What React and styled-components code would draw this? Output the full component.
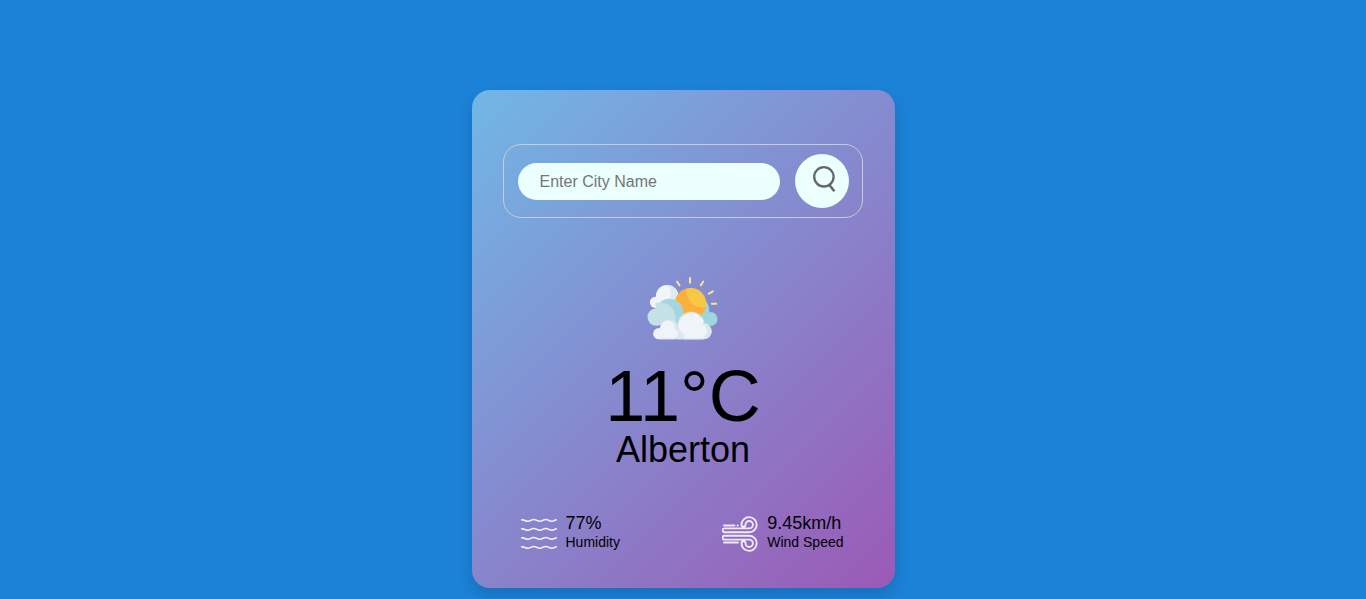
import React, { useState } from "react";
import styled, { createGlobalStyle } from "styled-components";

const GlobalStyle = createGlobalStyle`
  *, *::before, *::after { box-sizing: border-box; }
  body {
    margin: 0;
    background: #1c82d8;
    color: #000;
    font-family: "Liberation Sans", Arial, sans-serif;
  }
`;

const Page = styled.main`
  padding: 90px 16px 10px;
`;

const Card = styled.section`
  width: 100%;
  max-width: 423px;
  margin: 0 auto;
  padding: 54px 32px 36px 31px;
  border-radius: 18px;
  background: linear-gradient(135deg, #71b7e6, #9b59b6);
  box-shadow: 0 8px 16px rgba(0, 0, 0, 0.15);
`;

const SearchForm = styled.form`
  display: flex;
  align-items: center;
  gap: 15px;
  padding: 9px 13px 9px 14px;
  border: 1px solid #ccc;
  border-radius: 18px;
`;

const CityInput = styled.input`
  flex: 1;
  min-width: 0;
  height: 37px;
  padding: 1px 22px 0;
  border: 0;
  outline: 0;
  border-radius: 20px;
  background: #ebfffc;
  color: #555;
  font: 16px "Liberation Sans", Arial, sans-serif;

  &::placeholder { color: #757575; }
`;

const SearchButton = styled.button`
  display: flex;
  flex: none;
  align-items: center;
  justify-content: center;
  width: 54px;
  height: 54px;
  padding: 0 0 4px 4px;
  border: 0;
  border-radius: 50%;
  background: #ebfffc;
  cursor: pointer;
`;

const Weather = styled.div`
  display: flex;
  flex-direction: column;
  align-items: center;
  padding: 53px 0 0 1px;
`;

const Temperature = styled.h1`
  margin: 20px 0 0;
  font-size: 72px;
  font-weight: 400;
  line-height: 66px;
`;

const City = styled.h2`
  margin: 0;
  font-size: 36px;
  font-weight: 400;
  line-height: 42px;
`;

const Details = styled.div`
  display: flex;
  justify-content: space-between;
  margin-top: 42px;
  padding: 0 19px 0 18px;
`;

const Detail = styled.div`
  display: flex;
  align-items: flex-end;
  gap: 9px;
`;

const Reading = styled.div`
  padding-bottom: 1px;
`;

const Value = styled.p`
  margin: 0;
  font-size: 18px;
  line-height: 20px;
`;

const Label = styled.p`
  margin: 0;
  font-size: 14px;
  line-height: 18px;
`;

const SearchIcon = () => (
  <svg width="24" height="28" viewBox="0 0 24 28" fill="none" stroke="#666" aria-hidden="true">
    <circle cx="11.900" cy="11.800" r="9.700" strokeWidth="2.300" />
    <path d="M17 19.500l5.400 6.700" strokeWidth="2.600" />
  </svg>
);

const CloudIcon = () => (
  <svg width="72" height="72" viewBox="22.5 3 216 216" role="img" aria-label="Partly cloudy">
    <path
      d="M113 35l7 11M151.500 24v14M191 35l-7 11M220 64l-12 7M230 101.500h-13"
      stroke="#f8e58c"
      strokeWidth="6"
      strokeLinecap="round"
    />
    <g fill="#eff5f8">
      <circle cx="83" cy="79" r="34" />
      <circle cx="48" cy="97" r="17" />
      <path d="M48 90h50v24H48z" />
    </g>
    <path d="M83 45a34 34 0 0 1 33 28l-10 26-18-10c10-16 8-34-8-43.500z" fill="#dfe9ee" />
    <g fill="#9fd5dd">
      <path d="M198 92c9 8 12 20 11 35h-24z" />
      <circle cx="213" cy="147" r="21" />
      <path d="M180 115h25v53h-25z" />
    </g>
    <circle cx="153" cy="101" r="47" fill="#fcb03c" />
    <path d="M141.500 55.500A47 47 0 0 1 198.500 112c-34 5-60-20-57-56.500z" fill="#f6c944" />
    <g fill="#a4d6df">
      <circle cx="90" cy="127" r="41" />
      <path d="M70 130h62v34H70z" />
    </g>
    <g fill="#c5e1e8">
      <circle cx="50" cy="141" r="26" />
      <path d="M48 100c24-9 60 8 60 45v20H50z" />
    </g>
    <g fill="#dce8ed">
      <circle cx="155" cy="165" r="40" />
      <circle cx="193" cy="184" r="24" />
      <circle cx="90" cy="176" r="27" />
      <circle cx="113" cy="190" r="18" />
      <path d="M113 180h80v28h-80z" />
    </g>
    <g fill="#eff4f8">
      <circle cx="58" cy="191" r="17" />
      <path d="M61 174c4-24 32-30 42-10 4 8 3 12 2 15 14 4 14 22-2 29H58z" />
      <path d="M133 208c4-11-1-22-13-25 1-8-1-11-4-14 3-34 36-49 60-31 8 6 12 15 12 24 20 8 18 38-3 46z" />
    </g>
    <path d="M168 134l7 5M184 146l5 10" stroke="#fff" strokeWidth="4" strokeLinecap="round" />
    <path d="M58 207h135" stroke="#ccd6e4" strokeWidth="2" />
  </svg>
);

const HumidityIcon = () => (
  <svg width="36" height="36" viewBox="0 0 36 36" fill="none" stroke="#f2f0fa" strokeWidth="1.600" strokeLinecap="round" aria-hidden="true">
    {[4.500, 13.500, 22.500, 31.500].map((y) => (
      <path key={y} d={`M.8 ${y - 0.6}c3-.5 3 1.400 6 1.400s3-1.800 6-1.800 3 1.800 6 1.800 3-1.800 6-1.800 3 1.800 6 1.800 2.500-1.400 4.400-1.400`} />
    ))}
  </svg>
);

const WindIcon = () => (
  <svg width="36" height="36" viewBox="0 0 36 36" fill="none" stroke="#f0e9f7" strokeWidth="1.900" strokeLinecap="round" strokeLinejoin="round" aria-hidden="true">
    <path d="M2.500 16.300H27A7.600 7.600 0 1 0 19.500 8.700a2 2 0 0 0 4 0A3.700 3.700 0 1 1 27.200 12.400H2.500a1.900 1.900 0 0 0 0 3.900z" />
    <path d="M2.500 19.700H27A7.600 7.600 0 1 1 19.500 27.300a2 2 0 0 1 4 0A3.700 3.700 0 1 0 27.200 23.600H2.500a1.900 1.900 0 0 1 0-3.900z" />
    <path d="M2 9.500h10.500M15.600 9.500h.2M2 26.500h14" />
  </svg>
);

export default function App() {
  const [city, setCity] = useState("");

  return (
    <>
      <GlobalStyle />
      <Page>
        <Card>
          <SearchForm onSubmit={(event) => event.preventDefault()}>
            <CityInput
              type="text"
              aria-label="City name"
              placeholder="Enter City Name"
              value={city}
              onChange={(event) => setCity(event.target.value)}
            />
            <SearchButton type="submit" aria-label="Search">
              <SearchIcon />
            </SearchButton>
          </SearchForm>
          <Weather>
            <CloudIcon />
            <Temperature>11°C</Temperature>
            <City>Alberton</City>
          </Weather>
          <Details>
            <Detail>
              <HumidityIcon />
              <Reading>
                <Value>77%</Value>
                <Label>Humidity</Label>
              </Reading>
            </Detail>
            <Detail>
              <WindIcon />
              <Reading>
                <Value>9.45km/h</Value>
                <Label>Wind Speed</Label>
              </Reading>
            </Detail>
          </Details>
        </Card>
      </Page>
    </>
  );
}
